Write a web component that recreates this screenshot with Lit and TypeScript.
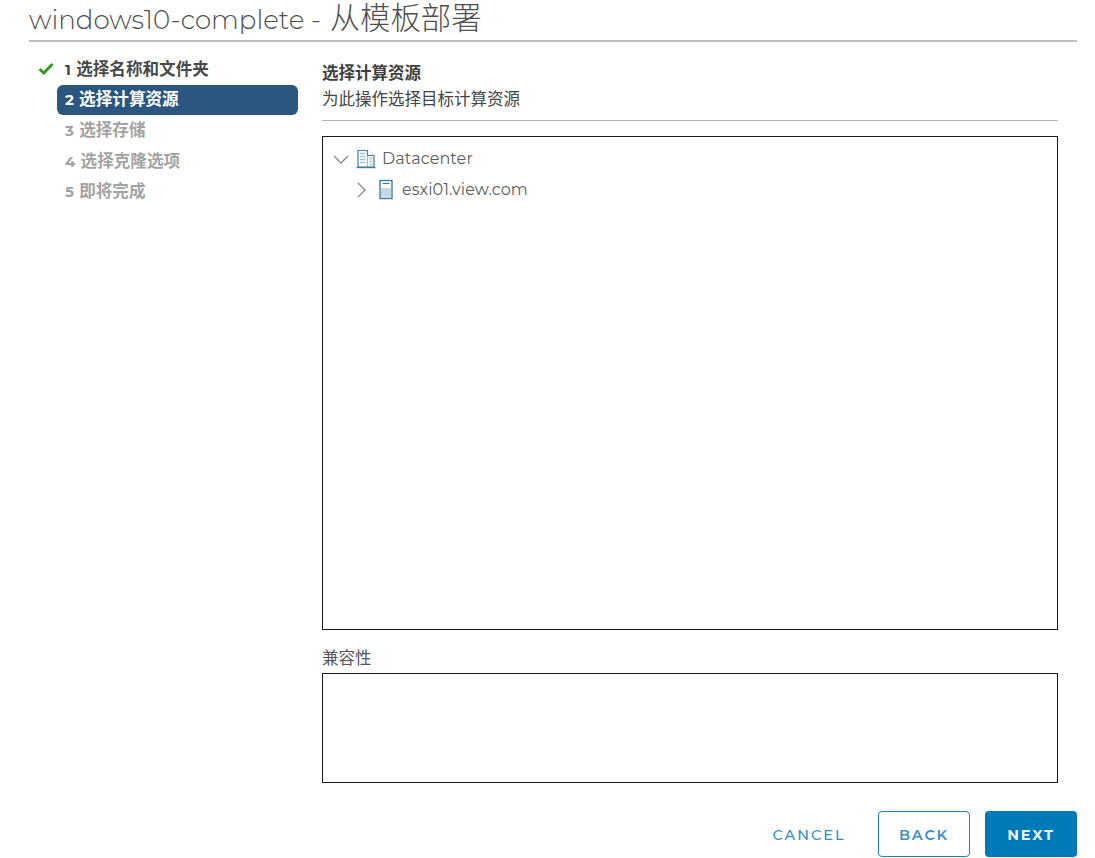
import { LitElement, html, css } from "lit";
import { customElement } from "lit/decorators.js";

const steps = [
  { n: 2, t: "选择计算资源", cls: "step active" },
  { n: 3, t: "选择存储", cls: "step off" },
  { n: 4, t: "选择克隆选项", cls: "step off" },
  { n: 5, t: "即将完成", cls: "step off" },
];

@customElement("app-root")
export class AppRoot extends LitElement {
  static styles = css`
    :host {
      display: block;
      width: 1095px;
      height: 858px;
      box-sizing: border-box;
      overflow: hidden;
      background: #fff;
      font-family: "Montserrat", "Noto Sans", "Noto Sans CJK SC", sans-serif;
      color: #565656;
    }
    .head {
      margin-left: 29px;
      width: 1048px;
      height: 42px;
      box-sizing: border-box;
      border-bottom: 2px solid #bfbfbf;
      font-size: 26.1px;
      font-weight: 300;
      line-height: 32px;
      padding-top: 2px;
      color: #4f4f4f;
      white-space: nowrap;
    }
    .cjk {
      font-size: 30.4px;
      line-height: 32px;
      margin-left: 2px;
      font-family: "Liberation Sans", "Noto Sans CJK SC", sans-serif;
      font-weight: 300;
    }
    .body {
      display: flex;
      height: 816px;
    }
    .nav {
      width: 322px;
      flex: none;
      padding: 11px 0 0 57px;
      box-sizing: border-box;
    }
    .step {
      position: relative;
      width: 241px;
      height: 30.5px;
      line-height: 30px;
      box-sizing: border-box;
      padding-left: 8px;
      font-size: 15px;
      font-weight: 700;
      word-spacing: 1px;
      border-radius: 6px;
      white-space: nowrap;
    }
    .step b {
      font-size: 16.6px;
      font-family: "Noto Sans CJK SC", sans-serif;
      font-weight: 700;
    }
    .done { color: #4a4a4a; }
    .active {
      background: #2b5680;
      color: #fff;
      margin-top: 1px;
      margin-bottom: -1px;
      line-height: 27px;
    }
    .off { color: #a3a3a3; }
    .check {
      position: absolute;
      left: -19px;
      top: 9px;
      width: 16px;
      height: 13px;
    }
    .main {
      width: 736px;
      flex: none;
      font-family: "Noto Sans CJK SC", sans-serif;
    }
    .title {
      margin-top: 19px;
      font-size: 16.5px;
      font-weight: 700;
      line-height: 22px;
      color: #3f3f3f;
    }
    .sub {
      margin-top: 3px;
      height: 35px;
      font-size: 16.5px;
      line-height: 24px;
      color: #444;
      box-sizing: border-box;
      border-bottom: 1px solid #b5b5b5;
    }
    .box {
      margin-top: 15px;
      height: 494px;
      box-sizing: border-box;
      border: 1px solid #1a1a1a;
      padding: 6px 0 0 8px;
    }
    .row {
      display: flex;
      align-items: center;
      height: 31px;
      font-size: 16px;
      letter-spacing: 0.1px;
      color: #5e5e5e;
      font-family: "Montserrat", "Noto Sans", sans-serif;
    }
    .row svg { flex: none; }
    .chev { width: 20px; height: 20px; }
    .dc { width: 22px; height: 20px; margin: 0 5px 0 4px; }
    .row.child { padding-left: 21px; }
    .host { width: 16px; height: 21px; margin: 0 8px 0 6px; }
    .label {
      margin-top: 13px;
      font-size: 16.5px;
      line-height: 28px;
      color: #565656;
    }
    .box2 {
      margin-top: 2px;
      height: 110px;
      box-sizing: border-box;
      border: 1px solid #1a1a1a;
    }
    .foot {
      display: flex;
      justify-content: flex-end;
      align-items: center;
      gap: 15px;
      margin-top: 28px;
      width: 755px;
    }
    .btn {
      width: 92px;
      height: 46px;
      box-sizing: border-box;
      display: flex;
      align-items: center;
      justify-content: center;
      padding-top: 1px;
      border-radius: 4px;
      font-family: "Montserrat", "Open Sans", sans-serif;
      font-size: 14.5px;
      letter-spacing: 1.8px;
      font-weight: 600;
    }
    .cancel { color: #2f8fc4; width: 92px; margin-right: 8px; font-weight: 500; letter-spacing: 2px; }
    .back { border: 1.5px solid #1d7fb8; color: #3d90c0; }
    .next { background: #0079b8; color: #e8f3f9; font-weight: 700; }
  `;

  render() {
    return html`
      <div class="head">windows10-complete - <span class="cjk">从模板部署</span></div>
      <div class="body">
        <div class="nav">
          <div class="step done">
            <svg class="check" viewBox="0 0 16 13">
              <path d="M1.5 7 L5.8 11 L14.5 2" fill="none" stroke="#2f9e1f" stroke-width="3" />
            </svg>
            1 <b>选择名称和文件夹</b>
          </div>
          ${steps.map((s) => html`<div class=${s.cls}>${s.n} <b>${s.t}</b></div>`)}
        </div>
        <div class="main">
          <div class="title">选择计算资源</div>
          <div class="sub">为此操作选择目标计算资源</div>
          <div class="box">
            <div class="row">
              <svg class="chev" viewBox="0 0 20 20">
                <path d="M3 7 L10 14 L17 7" fill="none" stroke="#8a8a8a" stroke-width="1.4" />
              </svg>
              <svg class="dc" viewBox="0 0 22 20">
                <path d="M3 1.5 H12.5 V18 H3 Z" fill="#fff" stroke="#3f7f9f" stroke-width="1.2" />
                <path d="M12.5 6.5 H19 V18 H12.5" fill="#fff" stroke="#3f7f9f" stroke-width="1.2" />
                <path d="M5 4.5 H10.5 M5 7.5 H10.5 M5 10.5 H10.5 M5 13.5 H10.5 M14.5 9.5 H17.5 M14.5 12.5 H17.5 M14.5 15.5 H17.5" stroke="#a9c3d2" stroke-width="1.4" />
                <path d="M1.5 18.5 H20.5" stroke="#3f7f9f" stroke-width="1.4" />
              </svg>
              <span>Datacenter</span>
            </div>
            <div class="row child">
              <svg class="chev" viewBox="0 0 20 20">
                <path d="M6 3 L13 10 L6 17" fill="none" stroke="#8a8a8a" stroke-width="1.4" />
              </svg>
              <svg class="host" viewBox="0 0 16 21">
                <rect x="2" y="1.5" width="12" height="18" fill="#fff" stroke="#3f7f9f" stroke-width="1.4" />
                <rect x="3" y="9" width="10" height="10" fill="#c5d8e3" />
                <path d="M4.5 4.5 H11.5" stroke="#3f7f9f" stroke-width="1.2" />
              </svg>
              <span>esxi01.view.com</span>
            </div>
          </div>
          <div class="label">兼容性</div>
          <div class="box2"></div>
          <div class="foot">
            <div class="btn cancel">CANCEL</div>
            <div class="btn back">BACK</div>
            <div class="btn next">NEXT</div>
          </div>
        </div>
      </div>
    `;
  }
}
